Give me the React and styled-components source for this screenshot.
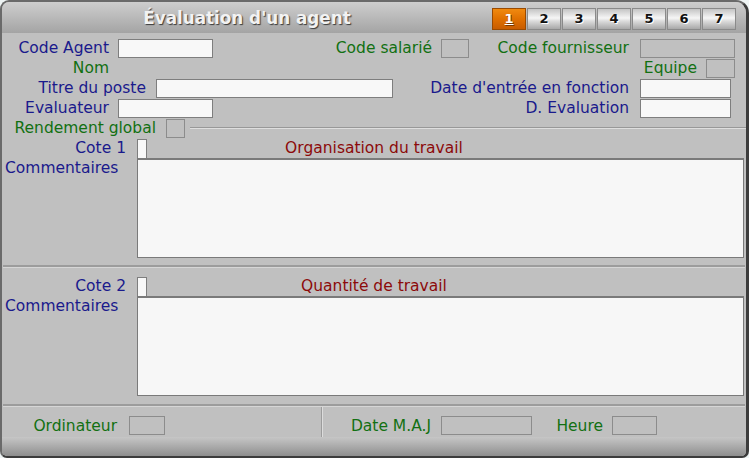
import React from "react";
import styled, { createGlobalStyle } from "styled-components";

const NAVY = "#1a1a8c";
const GREEN = "#127012";
const RED = "#8c0a0a";

const GlobalStyle = createGlobalStyle`
  body {
    margin: 0;
    background: #eef4f4;
    font-family: "DejaVu Sans", Verdana, sans-serif;
  }
`;

export default function App() {
  return (
    <>
      <GlobalStyle />
      <Window>
        <TitleBar>
          <Title>Évaluation d'un agent</Title>
          <Tabs>
            {[1, 2, 3, 4, 5, 6, 7].map((n) => (
              <Tab key={n} $active={n === 1}>{n}</Tab>
            ))}
          </Tabs>
        </TitleBar>

        <Body>
          <Row>
            <Label $w={107} $c={NAVY}>Code Agent</Label>
            <Field $ml={9} $w={95} />
            <Label $w={219} $c={GREEN}>Code salarié</Label>
            <Field $ml={9} $w={28} $grey />
            <Label $w={160} $c={GREEN}>Code fournisseur</Label>
            <Field $ml={11} $w={95} $grey />
          </Row>
          <Row>
            <Label $w={107} $c={GREEN}>Nom</Label>
            <Label $w={588} $c={GREEN}>Equipe</Label>
            <Field $ml={9} $w={29} $grey />
          </Row>
          <Row>
            <Label $w={144} $c={NAVY}>Titre du poste</Label>
            <Field $ml={10} $w={237} />
            <Label $w={236} $c={NAVY}>Date d'entrée en fonction</Label>
            <Field $ml={11} $w={91} />
          </Row>
          <Row>
            <Label $w={107} $c={NAVY}>Evaluateur</Label>
            <Field $ml={9} $w={95} />
            <Label $w={416} $c={NAVY}>D. Evaluation</Label>
            <Field $ml={11} $w={91} />
          </Row>
          <Row>
            <Label $w={154} $c={GREEN}>Rendement global</Label>
            <Field $ml={10} $w={19} $grey />
            <Groove />
          </Row>

          <Criterion label="Cote 1" title="Organisation du travail" />
          <Separator $mt={7} />
          <Criterion label="Cote 2" title="Quantité de travail" $mt={8} />
          <Separator $mt={8} />

          <Footer>
            <FooterCell $w={320} $divider>
              <Label $w={115} $c={GREEN}>Ordinateur</Label>
              <Field $ml={12} $w={36} $grey />
            </FooterCell>
            <FooterCell>
              <Label $w={109} $c={GREEN}>Date M.A.J</Label>
              <Field $ml={10} $w={91} $grey />
              <Label $w={71} $c={GREEN}>Heure</Label>
              <Field $ml={9} $w={45} $grey />
            </FooterCell>
          </Footer>
        </Body>

        <BottomBar />
      </Window>
    </>
  );
}

function Criterion({ label, title, $mt }) {
  return (
    <Block $mt={$mt}>
      <CoteRow>
        <Label $w={124} $c={NAVY}>{label}</Label>
        <CoteBox />
        <Heading>{title}</Heading>
      </CoteRow>
      <CommentRow>
        <CommentLabel>Commentaires</CommentLabel>
        <Memo />
      </CommentRow>
    </Block>
  );
}

const Window = styled.div`
  width: 749px;
  height: 458px;
  box-sizing: border-box;
  display: flex;
  flex-direction: column;
  background: #c0c0c0;
  border-top: 2px solid #6a6a6a;
  border-left: 2px solid #6a6a6a;
  border-right: 3px solid #3c3c3c;
  border-bottom: 2px solid #3c3c3c;
  border-radius: 9px 13px 7px 7px;
  overflow: hidden;
`;

const TitleBar = styled.div`
  height: 31px;
  display: flex;
  align-items: center;
  background: linear-gradient(#cecece, #a4a4a4);
  flex-shrink: 0;
`;

const Title = styled.div`
  flex: 1;
  text-align: center;
  font-weight: bold;
  font-size: 16.8px;
  color: #f2f2f2;
  text-shadow: 1px 1px 1px #3a3a3a;
`;

const Tabs = styled.div`
  display: flex;
  gap: 1px;
  margin-right: 10px;
  margin-top: 2px;
`;

const Tab = styled.div`
  width: 34px;
  height: 22px;
  box-sizing: border-box;
  display: flex;
  align-items: center;
  justify-content: center;
  font-weight: bold;
  font-size: 13px;
  border: 1px solid ${(p) => (p.$active ? "#9a4a00" : "#8a8a8a")};
  color: ${(p) => (p.$active ? "#ffffff" : "#101010")};
  text-decoration: ${(p) => (p.$active ? "underline" : "none")};
  text-shadow: ${(p) => (p.$active ? "1px 1px 0 #7a3a00" : "1px 1px 0 #ffffff")};
  background: ${(p) =>
    p.$active
      ? "linear-gradient(#f08a10, #e07000 50%, #c85c00)"
      : "linear-gradient(#c4c4c4, #f6f6f6 45%, #dcdcdc 60%, #a8a8a8)"};
`;

const Body = styled.div`
  display: flex;
  flex-direction: column;
  padding-top: 5px;
  font-size: 15.5px;
`;

const Row = styled.div`
  display: flex;
  align-items: center;
  height: 20px;
`;

const Label = styled.div`
  width: ${(p) => p.$w}px;
  flex-shrink: 0;
  text-align: right;
  white-space: nowrap;
  color: ${(p) => p.$c};
  line-height: 20px;
`;

const Field = styled.div`
  margin-left: ${(p) => p.$ml || 0}px;
  width: ${(p) => p.$w}px;
  height: 19px;
  flex-shrink: 0;
  box-sizing: border-box;
  background: ${(p) => (p.$grey ? "#c0c0c0" : "#f8f8f8")};
  border: 1px solid ${(p) => (p.$grey ? "#8c8c8c" : "#7e7e7e")};
`;

const Groove = styled.div`
  flex: 1;
  margin-left: 5px;
  height: 0;
  border-top: 1px solid #989898;
  border-bottom: 1px solid #dedede;
`;

const Block = styled.div`
  display: flex;
  flex-direction: column;
  margin-top: ${(p) => p.$mt || 0}px;
`;

const CoteRow = styled.div`
  display: flex;
  align-items: flex-end;
  height: 20px;
`;

const CoteBox = styled.div`
  margin-left: 11px;
  width: 10px;
  height: 19px;
  box-sizing: border-box;
  background: #f8f8f8;
  border: 1px solid #7e7e7e;
  border-bottom: none;
`;

const Heading = styled.div`
  width: 454px;
  text-align: center;
  color: ${RED};
  line-height: 20px;
  align-self: center;
`;

const CommentRow = styled.div`
  display: flex;
  height: 100px;
`;

const CommentLabel = styled.div`
  width: 135px;
  padding-left: 3px;
  box-sizing: border-box;
  color: ${NAVY};
  line-height: 20px;
  white-space: nowrap;
`;

const Memo = styled.div`
  width: 607px;
  box-sizing: border-box;
  background: #f7f7f7;
  border: 1px solid #7a7a7a;
  border-top-width: 2px;
`;

const Separator = styled.div`
  margin-top: ${(p) => p.$mt || 0}px;
  margin-left: 1px;
  margin-right: 1px;
  height: 0;
  border-top: 2px solid #9c9c9c;
  border-bottom: 1px solid #d6d6d6;
`;

const Footer = styled.div`
  display: flex;
  height: 30px;
`;

const FooterCell = styled.div`
  display: flex;
  align-items: flex-start;
  padding-top: 9px;
  box-sizing: border-box;
  width: ${(p) => (p.$w ? `${p.$w}px` : "auto")};
  flex: ${(p) => (p.$w ? "none" : 1)};
  border-right: ${(p) => (p.$divider ? "1px solid #9c9c9c" : "none")};
  box-shadow: ${(p) => (p.$divider ? "1px 0 0 #dcdcdc" : "none")};
`;

const BottomBar = styled.div`
  flex: 1;
  background: linear-gradient(#c6c6c6, #b0b0b0 40%, #8e8e8e);
`;
